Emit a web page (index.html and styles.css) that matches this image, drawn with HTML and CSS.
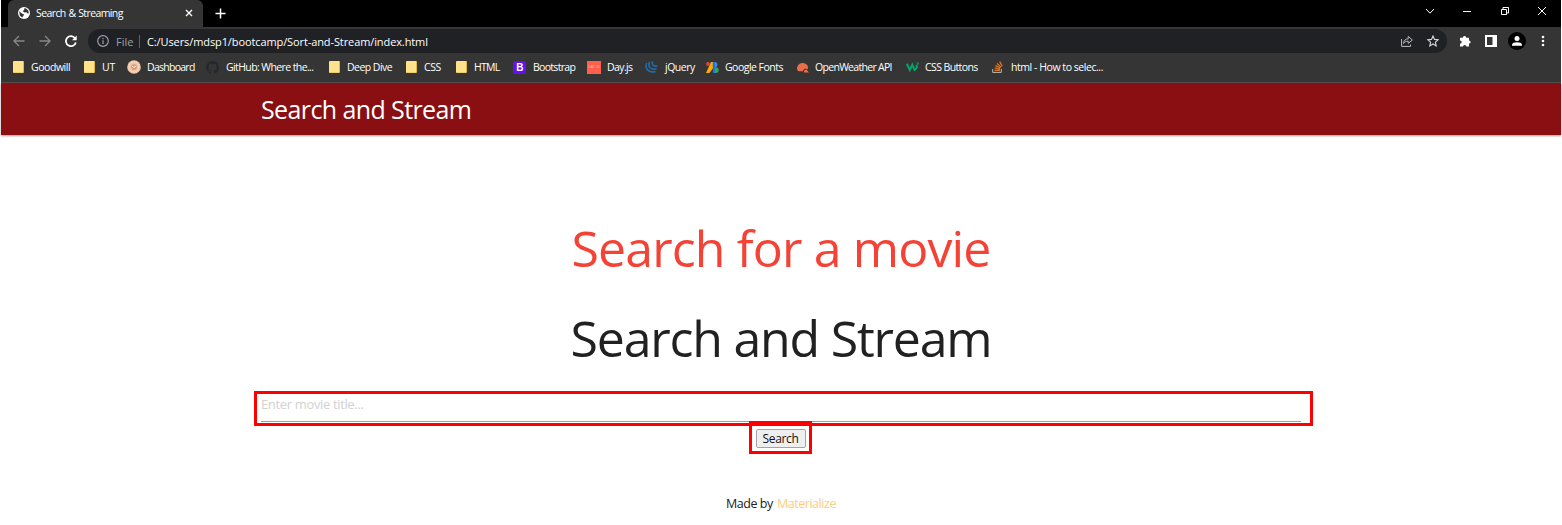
FILE: index.html
```html
<!DOCTYPE html>
<html lang="en">
<head>
<meta charset="utf-8">
<title>Search &amp; Streaming</title>
<link rel="stylesheet" href="styles.css">
</head>
<body>
<div class="window">
  <div class="tabstrip">
    <div class="tab">
      <svg class="globe" width="12" height="12" viewBox="0 0 12 12"><circle cx="6" cy="6" r="6" fill="#fff"/><path d="M1.2 4.2 4.3 6.8 6 7.2 5.6 8.6 4.2 10.6 1.8 8.4ZM6.4 1 6.2 2.8 4.8 4.2 6.4 5.4 8.6 5.2 9.6 6.6 10.9 6.2 10.2 3.5 8.4 1.7Z" fill="#353535"/></svg>
      <span class="tab-title">Search &amp; Streaming</span>
      <svg class="tab-close" width="8" height="8" viewBox="0 0 8 8"><path d="M1 1 7 7M7 1 1 7" stroke="#fff" stroke-width="1.4"/></svg>
    </div>
    <svg class="newtab" width="11" height="11" viewBox="0 0 11 11"><path d="M5.5 .5V10.5M.5 5.5H10.5" stroke="#fff" stroke-width="1.5"/></svg>
    <div class="controls">
      <svg width="10" height="10" viewBox="0 0 10 10"><path d="M1 3 5 7.2 9 3"/></svg>
      <svg width="10" height="10" viewBox="0 0 10 10"><path d="M1 5.5H9"/></svg>
      <svg width="10" height="10" viewBox="0 0 10 10"><path d="M1.5 3.5H6.5V8.5H1.5ZM3 3.3V1.5H8.5V7H6.8"/></svg>
      <svg width="10" height="10" viewBox="0 0 10 10"><path d="M1 1 9 9M9 1 1 9"/></svg>
    </div>
  </div>
  <div class="toolbar">
    <div class="nav">
      <svg width="12" height="12" viewBox="0 0 12 12" stroke="#86888a"><path d="M11.5 6H1M6 1 1 6 6 11"/></svg>
      <svg width="12" height="12" viewBox="0 0 12 12" stroke="#86888a"><path d="M.5 6H11M6 1 11 6 6 11"/></svg>
      <svg width="12" height="12" viewBox="0 0 12 12" stroke="#fff" stroke-width="1.8"><path d="M10 3.2A5 5 0 1 0 10.8 7.4"/><path d="M11.7 .5V5.3H7Z" fill="#fff" stroke="none"/></svg>
    </div>
    <div class="omnibox">
      <svg width="12" height="12" viewBox="0 0 12 12" fill="none" stroke="#9aa0a6" stroke-width="1.2"><circle cx="6" cy="6" r="5.3"/><path d="M6 5.2V9M6 3V4.3"/></svg>
      <span class="scheme">File</span>
      <span class="url">C:/Users/mdsp1/bootcamp/Sort-and-Stream/index.html</span>
      <svg class="share" width="12" height="12" viewBox="0 0 12 12" fill="none" stroke="#b9bbbe"><path d="M.6 4V11.4H9.5V9.5M2.5 8.5C2.8 5.4 4.5 4 7.2 3.8V1.4L11.4 5 7.2 8.4V6.2C5 6.2 3.7 6.8 2.5 8.5Z"/></svg>
      <svg width="12" height="12" viewBox="0 0 12 12" fill="none" stroke="#d5d7da" stroke-width="1.1"><path d="M6 1 7.5 4.4 11.2 4.7 8.4 7.2 9.2 10.9 6 9 2.8 10.9 3.6 7.2 .8 4.7 4.5 4.4Z"/></svg>
    </div>
    <div class="actions">
      <svg width="12" height="12" viewBox="0 0 12 12" fill="#fff"><path d="M1 2.7H3.8A1.7 1.7 0 0 1 7.2 2.7H10V5.4A1.6 1.6 0 0 1 10 8.6V11.6H7.4A1.7 1.7 0 0 0 4 11.6H1V8.8A1.7 1.7 0 0 0 1 5.4Z"/></svg>
      <svg width="12" height="12" viewBox="0 0 12 12"><path d="M0 0H12V12H0ZM2 2V10H7.5V2Z" fill="#fff" fill-rule="evenodd"/></svg>
      <svg width="18" height="18" viewBox="0 0 18 18"><circle cx="9" cy="9" r="9" fill="#000"/><circle cx="9" cy="6.5" r="2.5" fill="#fff"/><path d="M4 13.7V12.6C4 9.3 14 9.3 14 12.6V13.7Z" fill="#fff"/></svg>
      <svg width="4" height="12" viewBox="0 0 4 12" fill="#fff"><circle cx="2" cy="2" r="1.3"/><circle cx="2" cy="6" r="1.3"/><circle cx="2" cy="10" r="1.3"/></svg>
    </div>
  </div>
  <div class="bookmarks">
    <div class="bm goodwill"><i class="folder"></i><span>Goodwill</span></div>
    <div class="bm ut"><i class="folder"></i><span>UT</span></div>
    <div class="bm dashboard"><svg width="14" height="14" viewBox="0 0 14 14"><circle cx="7" cy="7" r="6.8" fill="#f2c4a5"/><circle cx="7" cy="7" r="5" fill="none" stroke="#fae9dc" stroke-dasharray="1.5 1"/><circle cx="7" cy="7" r="2.8" fill="#d99572"/><path d="M5 6 7 7.5 9 6" stroke="#fff" fill="none"/></svg><span>Dashboard</span></div>
    <div class="bm github"><svg width="13" height="13" viewBox="0 0 16 16" fill="#24292e"><path d="M8 0C3.58 0 0 3.58 0 8c0 3.54 2.29 6.53 5.47 7.59.4.07.55-.17.55-.38v-1.49c-2.01.37-2.53-.49-2.69-.94-.09-.23-.48-.94-.82-1.13-.28-.15-.68-.52-.01-.53.63-.01 1.08.58 1.23.82.72 1.21 1.87.87 2.33.66.07-.52.28-.87.51-1.07-1.78-.2-3.64-.89-3.64-3.95 0-.87.31-1.59.82-2.15-.08-.2-.36-1.02.08-2.12 0 0 .67-.21 2.2.82a7.6 7.6 0 0 1 4 0c1.53-1.04 2.2-.82 2.2-.82.44 1.1.16 1.92.08 2.12.51.56.82 1.27.82 2.15 0 3.07-1.87 3.75-3.65 3.95.29.25.54.73.54 1.48v2.2c0 .21.15.46.55.38A8 8 0 0 0 16 8c0-4.42-3.58-8-8-8z"/></svg><span>GitHub: Where the...</span></div>
    <div class="bm deep"><i class="folder"></i><span>Deep Dive</span></div>
    <div class="bm css"><i class="folder"></i><span>CSS</span></div>
    <div class="bm html"><i class="folder"></i><span>HTML</span></div>
    <div class="bm bootstrap"><b class="bs-logo">B</b><span>Bootstrap</span></div>
    <div class="bm dayjs"><b class="day-logo">DAY.JS</b><span>Day.js</span></div>
    <div class="bm jquery"><svg width="13" height="12" viewBox="0 0 13 12" fill="none" stroke="#1d71ad" stroke-width="1.5"><path d="M1.8 2C-.8 7 3.5 12.5 10.5 10.5M4.5 1C2.5 5.5 6 9.5 11.5 7.8M7.5 .5C6.5 3.5 8.5 6 12.5 4.8"/></svg><span>jQuery</span></div>
    <div class="bm gfonts"><svg width="13" height="11" viewBox="0 0 13 11"><path d="M5 0H8V5L3.5 11H0Z" fill="#fbab00"/><circle cx="2" cy="2" r="1.9" fill="#ea4335"/><path d="M8 0H9.5A2.7 2.7 0 0 1 9.5 5.2H8Z" fill="#4285f4"/><path d="M8 5.2H9.8A2.9 2.9 0 0 1 9.8 11H8Z" fill="#34a853"/><path d="M6.8 0H9V11H6.8Z" fill="#1a73e8"/></svg><span>Google Fonts</span></div>
    <div class="bm weather"><svg width="13" height="12" viewBox="0 0 13 12" fill="#eb6e4b"><path d="M1 8.5A5.6 5.6 0 1 1 12.2 6.8L11.5 8.3 9.5 7.6 7.6 8.5 7 10.3H2.5Z"/><path d="M8 11.4C7.8 8.2 11 7.9 11.3 9.4L12.8 11.4Z"/></svg><span>OpenWeather API</span></div>
    <div class="bm buttons"><svg width="13" height="10" viewBox="0 0 13 10"><path d="M.8 1.8 3.8 8 6.3 2.8 8.5 8C10.8 7 11.5 4.2 10.2 3" fill="none" stroke="#05a56a" stroke-width="2"/><path d="M10.5 1H12.5L11.5 3" stroke="#05a56a" fill="none"/></svg><span>CSS Buttons</span></div>
    <div class="bm stack"><svg width="12" height="12" viewBox="0 0 12 12" fill="none"><path d="M.7 8V11.4H9.3V8" stroke="#bcbbbb"/><path d="M2.5 9.3H8M2.6 7 8.1 8.2M3.4 4.6 8.5 7M5 2.5 9.2 6.1M7.7 .6 10.2 5.2" stroke="#e87922" stroke-width="1.2"/></svg><span>html - How to selec...</span></div>
  </div>
  <nav class="navbar"><a class="brand">Search and Stream</a></nav>
  <main class="content">
    <h1 class="headline red">Search for a movie</h1>
    <h1 class="headline dark">Search and Stream</h1>
    <div class="field">
      <input class="query" type="text" placeholder="Enter movie title...">
      <div class="mark mark-field"></div>
    </div>
    <div class="submit">
      <button class="search">Search</button>
      <div class="mark mark-button"></div>
    </div>
  </main>
  <footer class="footer"><span class="made">Made by</span><a class="materialize">Materialize</a></footer>
</div>
</body>
</html>
```
FILE: styles.css
```css
* { box-sizing: border-box; }
body { margin: 0; background: #fff; font-family: "Open Sans", "Noto Sans", sans-serif; }
.window { width: 1562px; height: 525px; padding: 0 1px; overflow: hidden; display: flex; flex-direction: column; }
svg { display: block; flex: none; }
.tabstrip { height: 27px; background: #000; display: flex; align-items: center; }
.tab { width: 195px; margin-left: 7px; height: 27px; background: #353535; border-radius: 6px 6px 0 0; display: flex; align-items: center; padding: 0 10px 1px; }
.tab-title { margin-left: 6px; font-size: 10.5px; color: #fff; white-space: nowrap; letter-spacing: -0.6px; word-spacing: 0.6px; }
.tab-close { margin-left: auto; }
.newtab { margin-left: 12px; }
.controls { margin-left: auto; margin-right: 14px; display: flex; gap: 27.5px; padding-bottom: 6px; }
.controls svg { fill: none; stroke: #fff; stroke-width: 1; }
.toolbar { height: 28px; background: #353535; display: flex; align-items: center; }
.nav { display: flex; gap: 14px; margin-left: 12px; width: 75px; fill: none; stroke-width: 1.3; }
.omnibox { width: 1359px; height: 24px; border-radius: 12px; background: #202124; display: flex; align-items: center; padding: 0 8px 0 9px; font-size: 11px; white-space: nowrap; }
.scheme { color: #9aa0a6; margin-left: 7px; width: 24px; padding-right: 6px; border-right: 1px solid #5f6368; line-height: 13px; }
.url { color: #fff; margin-left: 7px; letter-spacing: -0.1px; }
.share { margin-left: auto; margin-right: 14px; }
.actions { display: flex; align-items: center; margin-left: 12px; gap: 14px; }
.actions svg:nth-child(3) { margin: 0 1px 0 -3px; }
.bookmarks { height: 28px; background: #353535; border-bottom: 1px solid #595151; display: flex; align-items: center; padding: 0 0 3px 12px; }
.bm { display: flex; align-items: center; height: 20px; flex: none; font-size: 10.5px; color: #fff; white-space: nowrap; letter-spacing: -0.5px; }
.bm > :first-child { margin-right: 7px; }
.folder { width: 11px; height: 12px; flex: none; background: #ffe28a; border-right: 1px solid #e2b73e; border-bottom: 1px solid #efcf67; border-radius: 1px; }
.goodwill { width: 71px; letter-spacing: -0.45px; }
.ut { width: 43px; letter-spacing: -0.2px; }
.dashboard { width: 79px; letter-spacing: -0.73px; }
.dashboard > :first-child { margin-right: 6px; }
.github { width: 123px; letter-spacing: -0.6px; }
.deep { width: 77px; letter-spacing: -0.55px; }
.css { width: 50px; letter-spacing: -0.4px; }
.html { width: 57px; letter-spacing: -0.7px; }
.bootstrap { width: 74px; letter-spacing: -0.7px; }
.dayjs { width: 58px; letter-spacing: -0.6px; }
.jquery { width: 61px; letter-spacing: -0.5px; }
.gfonts { width: 90px; letter-spacing: -0.52px; }
.weather { width: 110px; letter-spacing: -0.7px; }
.buttons { width: 86px; letter-spacing: -0.6px; }
.bm.dayjs > :first-child, .bm.gfonts > :first-child, .bm.weather > :first-child, .bm.buttons > :first-child { margin-right: 6px; }
.stack { letter-spacing: -0.45px; }
.bs-logo { width: 13px; height: 13px; border-radius: 2px; background: #6610f2; font: bold 10px/13px "Liberation Sans", sans-serif; text-align: center; }
.day-logo { width: 14px; height: 13px; background: #ff5f4c; color: #ffb0a5; font: 3.5px/13px "Liberation Sans", sans-serif; letter-spacing: 0; text-align: center; }
.navbar { flex: none; height: 52px; background: #8a0f13; box-shadow: 0 1px 2px rgba(0,0,0,.4); padding-left: 260px; display: flex; align-items: center; }
.brand { color: #fff; font-size: 25px; line-height: 50px; letter-spacing: -0.6px; }
.content { width: 1040px; margin: 0 auto; display: flex; flex-direction: column; align-items: center; padding-top: 83px; }
.headline { margin: 0 0 30px; font-size: 50px; line-height: 60px; font-weight: 400; white-space: nowrap; }
.red { color: #f44336; letter-spacing: -0.85px; }
.dark { color: #212121; letter-spacing: -1.2px; margin-bottom: 18px; }
.field { position: relative; width: 1040px; height: 36px; }
.query { display: block; width: 100%; height: 36px; border: 0; border-bottom: 1px solid #9e9e9e; padding: 0; font: 13px "Open Sans", sans-serif; background: transparent; letter-spacing: -0.35px; outline: 0; }
.query::placeholder { color: #d1d1d1; opacity: 1; }
.submit { position: relative; padding-top: 7px; height: 32px; margin-right: 1px; }
.search { display: block; width: 50px; height: 19px; padding: 0; border: 1px solid #a4a4a4; border-radius: 2px; background: #efefef; color: #111; font: 12px/15px "Open Sans", sans-serif; letter-spacing: -0.35px; }
.mark { position: absolute; border: 3px solid #f00; pointer-events: none; }
.mark-field { left: -7px; top: 5px; width: 1059px; height: 35px; }
.mark-button { left: -7px; top: -1px; width: 63px; height: 33px; }
.footer { display: flex; justify-content: center; gap: 4px; margin-top: 40px; font-size: 12.5px; line-height: 20px; color: #212121; letter-spacing: -0.45px; }
.materialize { color: #ffcc80; }
```
